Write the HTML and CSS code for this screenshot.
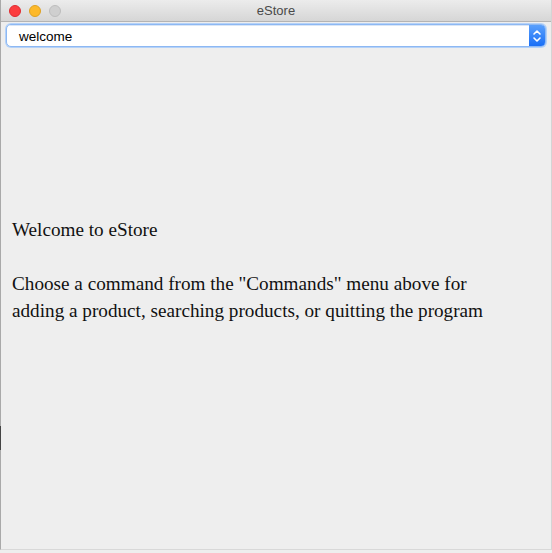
FILE: index.html
```html
<!DOCTYPE html>
<html>
<head>
<meta charset="utf-8">
<link rel="stylesheet" href="styles.css">
</head>
<body>
<div class="window">
  <div class="titlebar">
    <div class="lights">
      <span class="light red"></span>
      <span class="light yellow"></span>
      <span class="light grey"></span>
    </div>
    <div class="title">eStore</div>
  </div>
  <div class="toolbar">
    <div class="combo">
      <div class="combo-text">welcome</div>
      <div class="combo-btn">
        <svg width="10" height="14" viewBox="0 0 10 14">
          <path d="M2 5 L5 2 L8 5" fill="none" stroke="#fff" stroke-width="1.6" stroke-linecap="round" stroke-linejoin="round"/>
          <path d="M2 9 L5 12 L8 9" fill="none" stroke="#fff" stroke-width="1.6" stroke-linecap="round" stroke-linejoin="round"/>
        </svg>
      </div>
    </div>
  </div>
  <div class="content">
    <p class="line">Welcome to eStore</p>
    <p class="line">&nbsp;</p>
    <p class="line">Choose a command from the "Commands" menu above for</p>
    <p class="line">adding a product, searching products, or quitting the program</p>
  </div>
</div>
<span class="caret"></span>
</body>
</html>
```
FILE: styles.css
```css
html, body {
  margin: 0;
  padding: 0;
  background: #eeeeee;
}
body {
  position: relative;
}
.window {
  position: relative;
  width: 552px;
  height: 550px;
  box-sizing: border-box;
  border-left: 1px solid #a9a9a9;
  border-right: 1px solid #d4d4d4;
  border-bottom: 1px solid #d8d8d8;
  background: #eeeeee;
  display: flex;
  flex-direction: column;
  overflow: hidden;
}
.titlebar {
  position: relative;
  height: 22px;
  box-sizing: border-box;
  background: linear-gradient(#ececec, #d6d6d6);
  border-bottom: 1px solid #b4b4b4;
  display: flex;
  align-items: center;
  justify-content: center;
}
.lights {
  position: absolute;
  left: 8px;
  top: 5px;
  display: flex;
  gap: 8px;
}
.light {
  width: 12px;
  height: 12px;
  border-radius: 50%;
  box-sizing: border-box;
}
.red { background: #fc3d3f; border: 1px solid #df2b31; }
.yellow { background: #fdb92a; border: 1px solid #dea122; }
.grey { background: #cfcfcf; border: 1px solid #bdbdbd; }
.title {
  font-family: "Liberation Sans", Arial, sans-serif;
  font-size: 13px;
  color: #4a4a4a;
}
.toolbar {
  padding: 2px 5px 0 5px;
}
.combo {
  height: 23px;
  box-sizing: border-box;
  border: 1px solid #8db8f3;
  border-radius: 5px;
  box-shadow: 0 0 0 1px #b5d2f8;
  background: #ffffff;
  display: flex;
  align-items: stretch;
  overflow: hidden;
}
.combo-text {
  flex: 1;
  padding-left: 12px;
  font-family: "Liberation Sans", Arial, sans-serif;
  font-size: 13.5px;
  color: #000;
  display: flex;
  align-items: center;
  border-top: 1px solid #d9e6f7;
}
.combo-btn {
  width: 16px;
  background: linear-gradient(#5aa0fc, #1a6ff6);
  display: flex;
  align-items: center;
  justify-content: center;
}
.content {
  flex: 1;
  padding: 169px 0 0 11px;
}
.line {
  margin: 0;
  font-family: "Liberation Serif", "Times New Roman", serif;
  font-size: 19.2px;
  line-height: 27px;
  color: #111;
}
.caret {
  position: absolute;
  left: 0;
  top: 426px;
  width: 1px;
  height: 24px;
  background: #444;
}
```
